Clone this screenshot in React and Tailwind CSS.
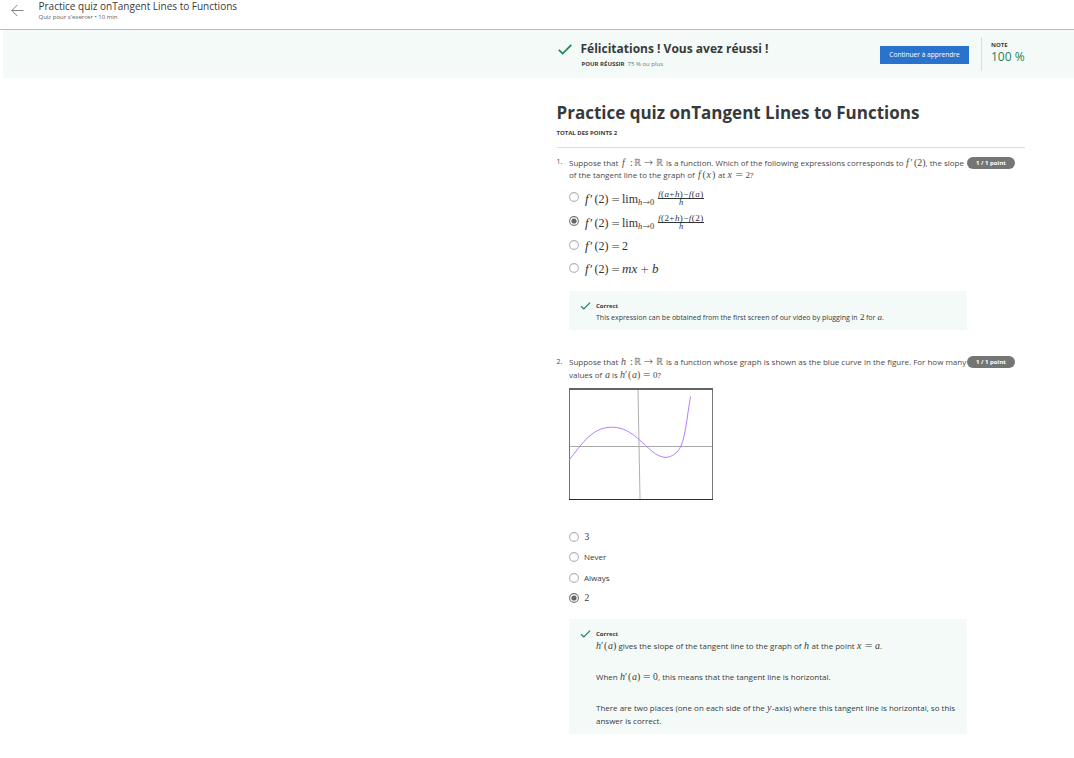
import React from 'react';

const SERIF = "font-['Liberation_Serif',serif]";

/* Upright math run */
function N({ className = '', children }) {
  return <span className={`${SERIF} block shrink-0 leading-none whitespace-pre ${className}`}>{children}</span>;
}
/* Italic math run */
function V({ className = '', children }) {
  return <i className={`${SERIF} block shrink-0 leading-none whitespace-pre ${className}`}>{children}</i>;
}
/* Relation sign or arrow, from a face with wide operators */
function Op({ className = '', children }) {
  return (
    <span className={`block shrink-0 font-['DejaVu_Sans',sans-serif] leading-none font-extralight whitespace-pre ${className}`}>
      {children}
    </span>
  );
}
/* Plain text run */
function T({ className = '', children }) {
  return <span className={`block shrink-0 whitespace-pre ${className}`}>{children}</span>;
}

function Line({ className = '', children }) {
  return <div className={`flex h-[12px] items-baseline leading-[12px] ${className}`}>{children}</div>;
}

function Check({ className }) {
  return (
    <svg viewBox="0 0 14 11" className={className} fill="none" stroke="#1f8354" strokeWidth="1.7">
      <path d="M0.8 5.8 L4.7 9.6 L13.3 0.9" />
    </svg>
  );
}

function Radio({ checked }) {
  return (
    <svg viewBox="0 0 10 10" className="size-[10px] shrink-0">
      <circle cx="5" cy="5" r="4.4" fill="#fff" stroke={checked ? '#757575' : '#b4b4b4'} strokeWidth="1.1" />
      {checked && <circle cx="5" cy="5" r="2.6" fill="#666" />}
    </svg>
  );
}

function Pill() {
  return (
    <span className="flex h-[12px] w-[48px] shrink-0 items-center justify-center rounded-full bg-[#757575] text-[6px] font-bold text-white">
      1 / 1 point
    </span>
  );
}

function Prime2() {
  return (
    <>
      <V className="w-[5px] text-[13px]">f</V>
      <N className="w-[4.500px] text-[13px]">′</N>
      <N className="w-[16.500px] text-[12px]">(2)</N>
      <Op className="w-[11px] text-[11px]">=</Op>
    </>
  );
}

function Limit() {
  return (
    <>
      <N className="w-[16px] text-[12px]">lim</N>
      <span className="relative top-[2px] flex w-[20px] items-baseline">
        <V className="w-[4.500px] text-[8.500px]">h</V>
        <Op className="w-[7.500px] text-[9px]">→</Op>
        <N className="text-[8.500px]">0</N>
      </span>
    </>
  );
}

function Fraction({ arg }) {
  const a = arg === 'a' ? <i>a</i> : arg;
  return (
    <span className="mt-[1px] flex w-[46px] flex-col items-center">
      <span className="h-[9px] w-full border-b border-[#333] font-['Liberation_Serif',serif] text-[9px] leading-[8px] tracking-[0.450px] whitespace-nowrap">
        <i>f</i>({a}+<i>h</i>)−<i>f</i>({a})
      </span>
      <i className="h-[8px] font-['Liberation_Serif',serif] text-[8.500px] leading-[7px]">h</i>
    </span>
  );
}

function LimitFormula({ arg }) {
  return (
    <div className="ml-[6px] flex h-[24px]">
      <div className="mt-[7px] flex h-[14px] items-baseline">
        <Prime2 />
        <Limit />
      </div>
      <div className="mt-[4px]">
        <Fraction arg={arg} />
      </div>
    </div>
  );
}

function Feedback({ className = '', children }) {
  return (
    <div className={`flex w-[398px] bg-[#f4faf8] pl-[11px] text-[#373a3c] ${className}`}>
      <Check className="mt-[11px] h-[8px] w-[11px] shrink-0" />
      <div className="ml-[5px]">
        <div className="mt-[10px] h-[10px] text-[6px] leading-[10px] font-bold">Correct</div>
        {children}
      </div>
    </div>
  );
}

function RtoR() {
  return (
    <>
      <N className="w-[4px] text-[10px]">:</N>
      <N className="w-[9.500px] text-[10px] text-[#777]">ℝ</N>
      <Op className="w-[12.500px] text-[11px]">→</Op>
      <N className="w-[10px] text-[10px] text-[#777]">ℝ</N>
    </>
  );
}

function Graph() {
  return (
    <svg viewBox="0 0 144 112" className="h-[112px] w-[144px]" fill="none">
      <rect width="144" height="112" fill="#fff" />
      <path d="M0 58.5H144" stroke="#a9a9a9" />
      <path d="M69 1L71 111" stroke="#b0b0b0" />
      <path d="M0.5 1V111M143.5 1V111" stroke="#747474" />
      <path d="M0 1H144" stroke="#606468" strokeWidth="2" />
      <path d="M0 111.5H144" stroke="#2c2c2c" />
      <path
        d="M0.5 71.5C7 63.500 13 54.500 20 48.500C28 41.500 35 39.200 43.500 39.200C54 39.400 62 44.500 69.500 51C79 59 87 69.500 97 69.400C103 69.200 109 64.500 112 58C116.500 48 118 29 121.500 8.500"
        stroke="#b57cff"
      />
    </svg>
  );
}

export default function App() {
  return (
    <div className="h-[758px] w-[1074px] overflow-hidden bg-white font-['Open_Sans',sans-serif] text-[8px] text-[#4a4a4a]">
      <header className="flex h-[30px] border-b border-[#b9b9b9]">
        <svg viewBox="0 0 13 13" className="mt-[4px] ml-[11px] size-[13px]" fill="none" stroke="#757575" strokeWidth="0.9">
          <path d="M0.800 6.500H12.300M6.300 1L0.800 6.500L6.300 12" />
        </svg>
        <div className="ml-[14.500px]">
          <div className="h-[12px] text-[10px] leading-[12px] text-[#373a3c]">Practice quiz onTangent Lines to Functions</div>
          <div className="h-[10px] text-[6px] leading-[10px] text-[#5c5c5c]">Quiz pour s'exercer • 10 min</div>
        </div>
      </header>

      <section className="ml-[3px] flex h-[48px] bg-[#f4faf8]">
        <Check className="mt-[14px] ml-[555px] h-[11px] w-[14px] shrink-0" />
        <div className="ml-[8.500px] w-[299.500px] pt-[10px]">
          <h2 className="h-[17px] text-[12px] leading-[17px] font-bold whitespace-nowrap text-[#373a3c]">
            Félicitations ! Vous avez réussi !
          </h2>
          <p className="mt-[2px] ml-[1px] flex h-[10px] gap-[3px] text-[6px] leading-[10px]">
            <b className="text-[#373a3c]">POUR RÉUSSIR</b>
            <span className="text-[#757575]">75 % ou plus</span>
          </p>
        </div>
        <button className="mt-[16px] h-[18px] w-[89px] shrink-0 bg-[#2a73cc] pb-[1px] text-[6.600px] leading-[16px] whitespace-nowrap text-white">
          Continuer à apprendre
        </button>
        <div className="mt-[7px] ml-[12px] h-[34px] border-l border-[#d9dedc] pl-[9px]">
          <div className="mt-[4px] h-[8px] text-[6px] leading-[9px] font-bold text-[#373a3c]">NOTE</div>
          <div className="h-[15px] text-[12px] leading-[15px] whitespace-nowrap text-[#1f8354]">100 %</div>
        </div>
      </section>

      <main className="ml-[556.500px] w-[468.500px] pt-[23px]">
        <h1 className="h-[24px] text-[17px] leading-[24px] font-bold whitespace-nowrap text-[#373a3c]">
          Practice quiz onTangent Lines to Functions
        </h1>
        <div className="mt-[3px] h-[10px] text-[6px] leading-[10px] font-bold text-[#373a3c]">TOTAL DES POINTS 2</div>
        <hr className="mt-[9px] border-[#dcdcdc]" />

        <section className="mt-[9px] flex">
          <span className="-mt-[1px] w-[12.500px] shrink-0 text-[7px] leading-[12px]">1.</span>
          <div className="w-[398px] shrink-0">
            <Line>
              <T className="w-[53px]">Suppose that</T>
              <V className="w-[8px] text-[10px]">f</V>
              <RtoR />
              <T className="w-[240px]">is a function. Which of the following expressions corresponds to</T>
              <V className="w-[4.500px] text-[10px]">f</V>
              <N className="w-[3.500px] text-[10px]">′</N>
              <N className="w-[11.500px] text-[10px]">(2)</N>
              <T>, the slope</T>
            </Line>
            <Line>
              <T className="w-[129px]">of the tangent line to the graph of</T>
              <V className="w-[4.500px] text-[10px]">f</V>
              <N className="w-[4px] text-[10px]">(</N>
              <V className="w-[5.500px] text-[10px]">x</V>
              <N className="w-[6px] text-[10px]">)</N>
              <T className="w-[9.500px]">at</T>
              <V className="w-[7.500px] text-[10px]">x</V>
              <Op className="w-[10.500px] text-[10px]">=</Op>
              <N className="text-[9px]">2</N>
              <T>?</T>
            </Line>
            <ul className="mt-[4px] text-[#333]">
              <li className="flex h-[24px]">
                <span className="mt-[6.500px]"><Radio /></span>
                <LimitFormula arg="a" />
              </li>
              <li className="flex h-[24px]">
                <span className="mt-[6.500px]"><Radio checked /></span>
                <LimitFormula arg="2" />
              </li>
              <li className="flex h-[23px]">
                <span className="mt-[6.500px]"><Radio /></span>
                <div className="mt-[6px] ml-[6px] flex h-[14px] items-baseline"><Prime2 /><N className="text-[12px]">2</N></div>
              </li>
              <li className="flex h-[23px]">
                <span className="mt-[6.500px]"><Radio /></span>
                <div className="mt-[6px] ml-[6px] flex h-[14px] items-baseline">
                  <Prime2 />
                  <V className="w-[18px] text-[13px]">mx</V>
                  <Op className="w-[12px] text-[11px]">+</Op>
                  <V className="text-[13px]">b</V>
                </div>
              </li>
            </ul>
            <Feedback className="mt-[12px] h-[39px]">
              <div className="mt-[1px] flex h-[12px] items-baseline text-[7px] leading-[12px]">
                <T className="w-[264px]">This expression can be obtained from the first screen of our video by plugging in</T>
                <N className="w-[6px] text-[9px]">2</N>
                <T className="w-[11.500px]">for</T>
                <V className="text-[9px]">a</V>
                <T>.</T>
              </div>
            </Feedback>
          </div>
          <Pill />
        </section>

        <section className="mt-[26px] flex">
          <span className="w-[12.500px] shrink-0 text-[7px] leading-[12px]">2.</span>
          <div className="w-[398px] shrink-0">
            <Line>
              <T className="w-[52px]">Suppose that</T>
              <V className="w-[9px] text-[10px]">h</V>
              <RtoR />
              <T>is a function whose graph is shown as the blue curve in the figure. For how many</T>
            </Line>
            <Line className="mt-[1px]">
              <T className="w-[36px]">values of</T>
              <V className="w-[7px] text-[10px]">a</V>
              <T className="w-[8px]">is</T>
              <V className="w-[5px] text-[10px]">h</V>
              <N className="w-[3px] text-[10px]">′</N>
              <N className="w-[4px] text-[10px]">(</N>
              <V className="w-[5px] text-[10px]">a</V>
              <N className="w-[5.500px] text-[10px]">)</N>
              <Op className="w-[10.500px] text-[10px]">=</Op>
              <N className="text-[9px]">0</N>
              <T>?</T>
            </Line>
            <div className="mt-[7px] h-[112px]"><Graph /></div>
            <ul className="mt-[31.500px] text-[#373a3c]">
              <li className="flex h-[20px] gap-[5.500px]"><Radio /><N className="mt-[1.500px] text-[9.500px]">3</N></li>
              <li className="flex h-[21px] gap-[5px]"><Radio /><T className="-mt-[0.500px] leading-[12px]">Never</T></li>
              <li className="flex h-[20px] gap-[5px]"><Radio /><T className="-mt-[0.500px] leading-[12px]">Always</T></li>
              <li className="flex h-[20px] gap-[5.500px]"><Radio checked /><N className="mt-[1.500px] text-[9.500px]">2</N></li>
            </ul>
            <Feedback className="mt-[6.500px] h-[115px]">
              <Line className="mt-[1px]">
                <V className="w-[5px] text-[10px]">h</V>
                <N className="w-[3px] text-[10px]">′</N>
                <N className="w-[4px] text-[10px]">(</N>
                <V className="w-[5px] text-[10px]">a</V>
                <N className="w-[5.500px] text-[10px]">)</N>
                <T className="w-[185.500px]">gives the slope of the tangent line to the graph of</T>
                <V className="w-[7.500px] text-[10px]">h</V>
                <T className="w-[45.500px]">at the point</T>
                <V className="w-[7.500px] text-[10px]">x</V>
                <Op className="w-[10.500px] text-[10px]">=</Op>
                <V className="text-[10px]">a</V>
                <T>.</T>
              </Line>
              <Line className="mt-[19px]">
                <T className="w-[24px]">When</T>
                <V className="w-[5px] text-[10px]">h</V>
                <N className="w-[3px] text-[10px]">′</N>
                <N className="w-[4px] text-[10px]">(</N>
                <V className="w-[5px] text-[10px]">a</V>
                <N className="w-[5.500px] text-[10px]">)</N>
                <Op className="w-[10.500px] text-[10px]">=</Op>
                <N className="w-[5px] text-[9.500px]">0</N>
                <T>, this means that the tangent line is horizontal.</T>
              </Line>
              <Line className="mt-[19px]">
                <T className="w-[171px]">There are two places (one on each side of the</T>
                <V className="w-[5px] text-[10px]">y</V>
                <T>-axis) where this tangent line is horizontal, so this</T>
              </Line>
              <Line className="mt-[1px]"><T>answer is correct.</T></Line>
            </Feedback>
          </div>
          <Pill />
        </section>
      </main>
    </div>
  );
}
